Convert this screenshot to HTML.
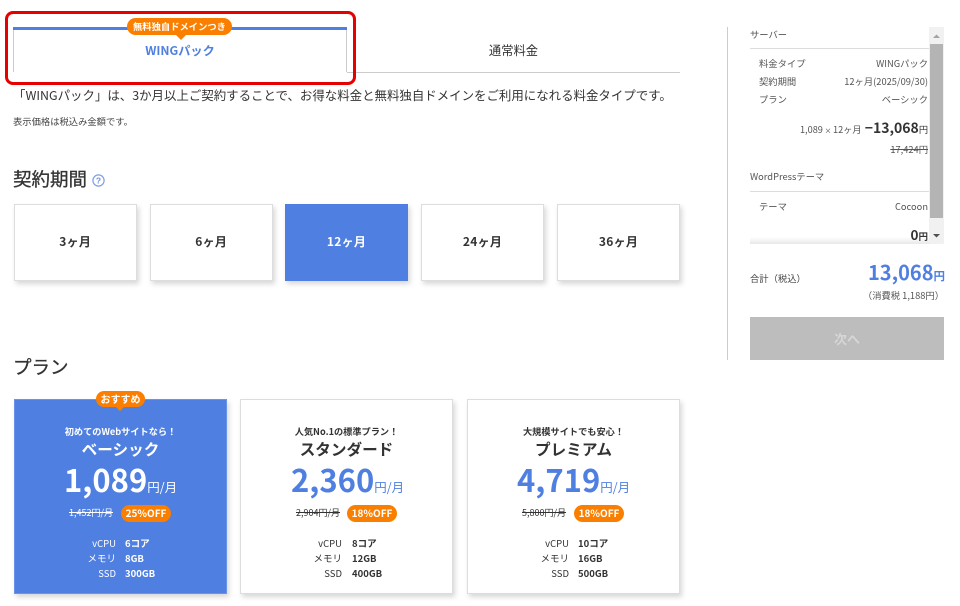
<!DOCTYPE html>
<html lang="ja">
<head>
<meta charset="utf-8">
<title>WINGパック</title>
<style>
html,body{margin:0;padding:0;background:#fff}
body{width:960px;height:606px;overflow:hidden;position:relative;font-family:"Liberation Sans","Noto Sans CJK JP",sans-serif;color:#333}
.a{position:absolute;white-space:nowrap}
.c{text-align:center}
.r{text-align:right}
.b{font-weight:700}
.box{position:absolute;background:#fff;border:1px solid #ddd;box-shadow:2px 3px 5px rgba(0,0,0,.16);box-sizing:border-box}
.term{top:204px;height:77px;line-height:74px;text-align:center;font-size:12px;font-weight:700;font-family:"Noto Sans CJK JP",sans-serif;letter-spacing:.3px}
.sel{background:#4f7fe0;border-color:#4f7fe0;color:#fff}
.plan{top:399px;width:213px;height:195px}
.s{font-family:"Noto Sans CJK JP",sans-serif}
.h{font-family:"Noto Sans CJK JP",sans-serif;font-size:18.5px;line-height:28px;-webkit-text-stroke:.3px #333}
.m{font-size:9.3px;line-height:14px;color:#555}
.sub{width:213px;line-height:16px;font-size:9.2px}
.name{width:213px;line-height:22px;font-size:15.6px}
.price{top:457px;line-height:44px;font-size:31px;font-weight:700}
.price span{font-size:12.5px;font-weight:400}
.old{top:505px;line-height:16px;font-size:9px;text-decoration:line-through}
.off{top:505px;width:50px;height:17px;line-height:16px;border-radius:9px;font-size:10px}
.lab{width:46px;line-height:15px;font-size:9.5px}
.val{line-height:15px;font-size:9.5px;font-weight:700}
.orange{position:absolute;background:#fa7f00;color:#fff;font-family:"Noto Sans CJK JP",sans-serif;font-weight:700;text-align:center}
.tail{position:absolute;width:0;height:0;border-left:5px solid transparent;border-right:5px solid transparent;border-top:5px solid #fa7f00}
</style>
</head>
<body>
<div class="a" style="left:13px;top:27px;width:334px;height:3px;background:#4f7fe0"></div>
<div class="a" style="left:13px;top:30px;width:1px;height:42px;background:#ccc"></div>
<div class="a" style="left:346px;top:30px;width:1px;height:42px;background:#ccc"></div>
<div class="a" style="left:347px;top:72px;width:333px;height:1px;background:#ccc"></div>
<div class="a" style="left:5px;top:11px;width:351px;height:74px;border:3px solid #e60000;border-radius:8px;box-sizing:border-box"></div>
<div class="orange" style="left:127px;top:18px;width:105px;height:17px;line-height:16px;border-radius:9px;font-size:9.3px">無料独自ドメインつき</div>
<div class="tail" style="left:176px;top:35px"></div>
<div class="a c s b" style="left:13px;top:40px;width:334px;line-height:20px;font-size:12.2px;color:#4f7fe0">WINGパック</div>
<div class="a c s" style="left:347px;top:40px;width:333px;line-height:20px;font-size:12.3px;color:#333">通常料金</div>
<div class="a s" style="left:13px;top:85px;line-height:20px;font-size:12.45px">「WINGパック」は、3か月以上ご契約することで、お得な料金と無料独自ドメインをご利用になれる料金タイプです。</div>
<div class="a s" style="left:13px;top:114px;line-height:14px;font-size:9.3px;color:#444">表示価格は税込み金額です。</div>

<div class="a h" style="left:13px;top:165px">契約期間</div>
<svg class="a" style="left:91px;top:173px" width="15" height="15" viewBox="0 0 15 15"><circle cx="7.5" cy="7.5" r="5.6" fill="none" stroke="#7d9fe6" stroke-width="1.2"/><text x="7.5" y="10.6" text-anchor="middle" font-size="8.5" font-weight="700" fill="#6a8fe2" font-family="Liberation Sans">?</text></svg>

<div class="box term" style="left:14px;width:122.5px">3ヶ月</div>
<div class="box term" style="left:150px;width:122.5px">6ヶ月</div>
<div class="box term sel" style="left:285px;width:123px">12ヶ月</div>
<div class="box term" style="left:421px;width:123px">24ヶ月</div>
<div class="box term" style="left:557px;width:123px">36ヶ月</div>

<div class="a h" style="left:13px;top:353px">プラン</div>

<div class="box plan" style="left:14px;background:#4f7fe0;border-color:#6a94ea"></div>
<div class="orange" style="left:96px;top:391px;width:49px;height:16px;line-height:15px;border-radius:8px;font-size:10px">おすすめ</div>
<div class="tail" style="left:116px;top:407px;border-left-width:4px;border-right-width:4px;border-top-width:4px"></div>
<div class="a c s b sub" style="left:14px;top:423px;color:#fff">初めてのWebサイトなら！</div>
<div class="a c s b name" style="left:14px;top:438px;color:#fff">ベーシック</div>
<div class="a s price" style="left:64px;color:#fff">1,089<span>円/月</span></div>
<div class="a s old" style="left:69px;color:#fff">1,452円/月</div>
<div class="orange off" style="left:121px">25%OFF</div>
<div class="a r s lab" style="left:70px;top:536px;color:#fff">vCPU</div><div class="a s val" style="left:125px;top:536px;color:#fff">6コア</div>
<div class="a r s lab" style="left:70px;top:551px;color:#fff">メモリ</div><div class="a s val" style="left:125px;top:551px;color:#fff">8GB</div>
<div class="a r s lab" style="left:70px;top:566px;color:#fff">SSD</div><div class="a s val" style="left:125px;top:566px;color:#fff">300GB</div>

<div class="box plan" style="left:240px"></div>
<div class="a c s b sub" style="left:240px;top:423px">人気No.1の標準プラン！</div>
<div class="a c s b name" style="left:240px;top:438px">スタンダード</div>
<div class="a s price" style="left:291px;color:#4f7fe0">2,360<span>円/月</span></div>
<div class="a s old" style="left:296px">2,904円/月</div>
<div class="orange off" style="left:347px">18%OFF</div>
<div class="a r s lab" style="left:296px;top:536px">vCPU</div><div class="a s val" style="left:352px;top:536px">8コア</div>
<div class="a r s lab" style="left:296px;top:551px">メモリ</div><div class="a s val" style="left:352px;top:551px">12GB</div>
<div class="a r s lab" style="left:296px;top:566px">SSD</div><div class="a s val" style="left:352px;top:566px">400GB</div>

<div class="box plan" style="left:467px"></div>
<div class="a c s b sub" style="left:467px;top:423px">大規模サイトでも安心！</div>
<div class="a c s b name" style="left:467px;top:438px">プレミアム</div>
<div class="a s price" style="left:517px;color:#4f7fe0">4,719<span>円/月</span></div>
<div class="a s old" style="left:522px">5,800円/月</div>
<div class="orange off" style="left:574px">18%OFF</div>
<div class="a r s lab" style="left:523px;top:536px">vCPU</div><div class="a s val" style="left:578px;top:536px">10コア</div>
<div class="a r s lab" style="left:523px;top:551px">メモリ</div><div class="a s val" style="left:578px;top:551px">16GB</div>
<div class="a r s lab" style="left:523px;top:566px">SSD</div><div class="a s val" style="left:578px;top:566px">500GB</div>

<!-- Sidebar -->
<div class="a" style="left:727px;top:27px;width:1px;height:333px;background:#ccc"></div>
<div class="a s m" style="left:750px;top:27px">サーバー</div>
<div class="a" style="left:750px;top:48px;width:179px;height:1px;background:#ddd"></div>
<div class="a s m" style="left:759px;top:56px">料金タイプ</div>
<div class="a r s m" style="left:800px;top:56px;width:128px">WINGパック</div>
<div class="a s m" style="left:759px;top:74px">契約期間</div>
<div class="a r s m" style="left:800px;top:74px;width:128px">12ヶ月(2025/09/30)</div>
<div class="a s m" style="left:759px;top:92px">プラン</div>
<div class="a r s m" style="left:800px;top:92px;width:128px">ベーシック</div>
<div class="a r s" style="left:760px;top:118px;width:168px;line-height:20px;font-size:9.2px;color:#555">1,089<span style="font-size:7px"> × </span>12ヶ月 <b style="font-size:14px;color:#333;margin-left:1px">−13,068</b><span style="color:#333">円</span></div>
<div class="a r s m" style="left:800px;top:142px;width:128px;text-decoration:line-through">17,424円</div>
<div class="a s m" style="left:750px;top:169px">WordPressテーマ</div>
<div class="a" style="left:750px;top:191px;width:179px;height:1px;background:#ddd"></div>
<div class="a s m" style="left:759px;top:199px">テーマ</div>
<div class="a r s m" style="left:800px;top:199px;width:128px">Cocoon</div>
<div class="a" style="left:750px;top:237px;width:179px;height:7px;background:linear-gradient(#fff,#e8e8e8)"></div>
<div class="a r s b" style="left:800px;top:225px;width:128px;line-height:18px;font-size:13.5px;color:#333">0<span style="font-size:9.5px">円</span></div>
<div class="a" style="left:929px;top:27px;width:15px;height:217px;background:#f1f1f1"></div>
<div class="a" style="left:930px;top:44px;width:13px;height:174px;background:#b4b4b4"></div>
<svg class="a" style="left:929px;top:27px" width="15" height="217"><path d="M4 11 L7.5 7.5 L11 11 Z" fill="#a3a3a3"/><path d="M4 207 L11 207 L7.5 210.5 Z" fill="#505050"/></svg>
<div class="a s m" style="left:750px;top:271px;color:#444">合計（税込）</div>
<div class="a r s b" style="left:800px;top:257px;width:145px;line-height:30px;font-size:20px;color:#4f7fe0">13,068<span style="font-size:11.5px">円</span></div>
<div class="a r s m" style="left:800px;top:288px;width:144px">（消費税 1,188円）</div>
<div class="a c s b" style="left:750px;top:317px;width:194px;height:43px;line-height:43px;background:#bdbdbd;color:#d6d6d6;font-size:13px">次へ</div>
</body>
</html>
